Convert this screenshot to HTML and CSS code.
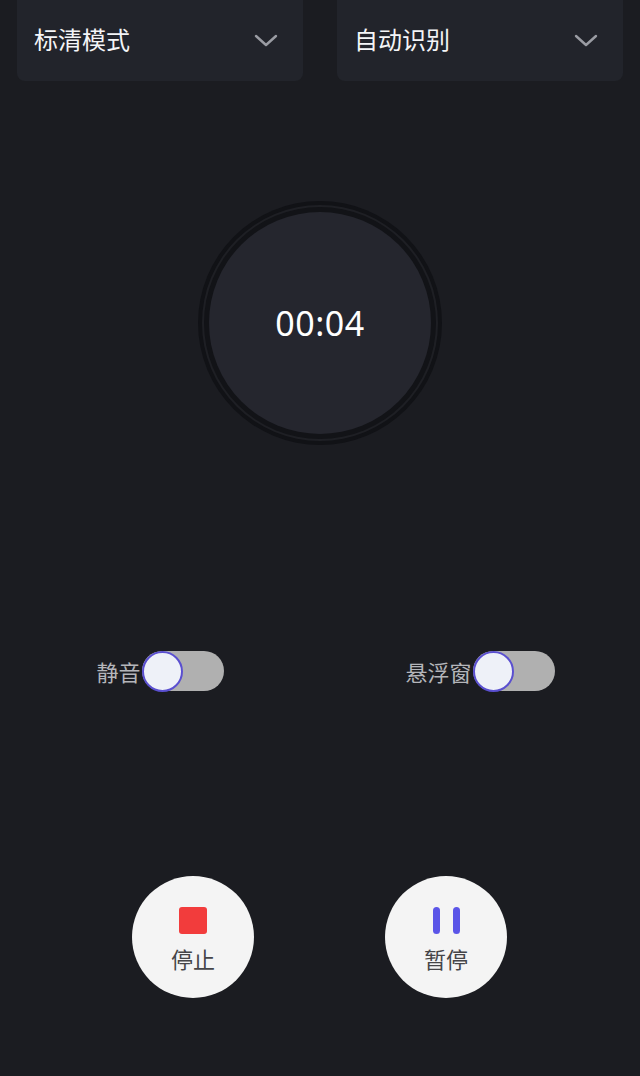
FILE: index.html
```html
<!DOCTYPE html>
<html lang="zh">
<head>
<meta charset="utf-8">
<link rel="stylesheet" href="styles.css">
</head>
<body>
<div class="page">
  <div class="selects">
    <div class="select">
      <span class="select-label">标清模式</span>
      <svg class="chev" width="24" height="14" viewBox="0 0 24 14"><path d="M2 2 L12 11 L22 2" fill="none" stroke="#9a9ca3" stroke-width="2.4" stroke-linecap="round" stroke-linejoin="round"/></svg>
    </div>
    <div class="select">
      <span class="select-label">自动识别</span>
      <svg class="chev" width="24" height="14" viewBox="0 0 24 14"><path d="M2 2 L12 11 L22 2" fill="none" stroke="#9a9ca3" stroke-width="2.4" stroke-linecap="round" stroke-linejoin="round"/></svg>
    </div>
  </div>

  <div class="timer-wrap">
    <div class="ring-outer">
      <div class="ring-line">
        <div class="ring-dark">
          <div class="timer">00:04</div>
        </div>
      </div>
    </div>
  </div>

  <div class="toggles">
    <div class="toggle-group">
      <span class="toggle-label">静音</span>
      <div class="switch"><div class="knob"></div></div>
    </div>
    <div class="toggle-group">
      <span class="toggle-label">悬浮窗</span>
      <div class="switch"><div class="knob"></div></div>
    </div>
  </div>

  <div class="actions">
    <div class="action">
      <div class="stop-icon"></div>
      <span class="action-label">停止</span>
    </div>
    <div class="action">
      <div class="pause-icon"><span class="bar"></span><span class="bar"></span></div>
      <span class="action-label">暂停</span>
    </div>
  </div>
</div>
</body>
</html>
```

FILE: styles.css
```css
html, body {
  margin: 0;
  padding: 0;
  background: #1b1c21;
}
body {
  font-family: "Noto Sans CJK SC", "Noto Sans", sans-serif;
  color: #fff;
}
.page {
  width: 640px;
  height: 1076px;
  display: flex;
  flex-direction: column;
}
.selects {
  display: flex;
  gap: 34px;
  padding: 0 17px;
}
.select {
  flex: 1;
  height: 81px;
  background: #22242b;
  border-radius: 0 0 8px 8px;
  display: flex;
  align-items: center;
  justify-content: space-between;
  padding: 0 25px 0 17px;
  box-sizing: border-box;
}
.select-label {
  font-size: 24px;
  color: #f4f5f7;
  line-height: 1;
  margin-top: -3px;
}
.chev {
  display: block;
}
.timer-wrap {
  display: flex;
  justify-content: center;
  margin-top: 120px;
}
.ring-outer {
  width: 244px;
  height: 244px;
  border-radius: 50%;
  background: #111216;
  padding: 4px;
  box-sizing: border-box;
}
.ring-line {
  width: 100%;
  height: 100%;
  border-radius: 50%;
  background: #1e1f24;
  padding: 2px;
  box-sizing: border-box;
}
.ring-dark {
  width: 100%;
  height: 100%;
  border-radius: 50%;
  background: #121317;
  padding: 5px;
  box-sizing: border-box;
}
.timer {
  width: 100%;
  height: 100%;
  border-radius: 50%;
  background: #25262e;
  display: flex;
  align-items: center;
  justify-content: center;
  font-family: "Noto Sans", "Liberation Sans", sans-serif;
  font-size: 34px;
  color: #fff;
  letter-spacing: 0.5px;
}
.toggles {
  display: grid;
  grid-template-columns: 1fr 1fr;
  margin-top: 206px;
}
.toggle-group {
  display: flex;
  justify-content: center;
  align-items: center;
}
.toggle-label {
  font-size: 22px;
  color: #b4b5ba;
  line-height: 1;
  margin-right: 1px;
}
.switch {
  width: 82px;
  height: 40px;
  border-radius: 20px;
  background: #b0b0b0;
  display: flex;
  align-items: center;
}
.knob {
  width: 41px;
  height: 41px;
  border-radius: 50%;
  background: #eef1f8;
  border: 2px solid #5a4fd0;
  box-sizing: border-box;
}
.actions {
  display: flex;
  justify-content: center;
  gap: 131px;
  margin-top: 185px;
  padding-right: 1px;
}
.action {
  width: 122px;
  height: 122px;
  border-radius: 50%;
  background: #f4f4f4;
  display: flex;
  flex-direction: column;
  align-items: center;
  padding-top: 31px;
  box-sizing: border-box;
}
.stop-icon {
  width: 28px;
  height: 27px;
  border-radius: 3px;
  background: #f23c3c;
}
.pause-icon {
  display: flex;
  gap: 13px;
  height: 27px;
}
.bar {
  width: 7px;
  height: 27px;
  border-radius: 3.5px;
  background: #5b55e8;
}
.action-label {
  font-size: 22px;
  color: #454548;
  line-height: 1;
  margin-top: 13px;
}
```
